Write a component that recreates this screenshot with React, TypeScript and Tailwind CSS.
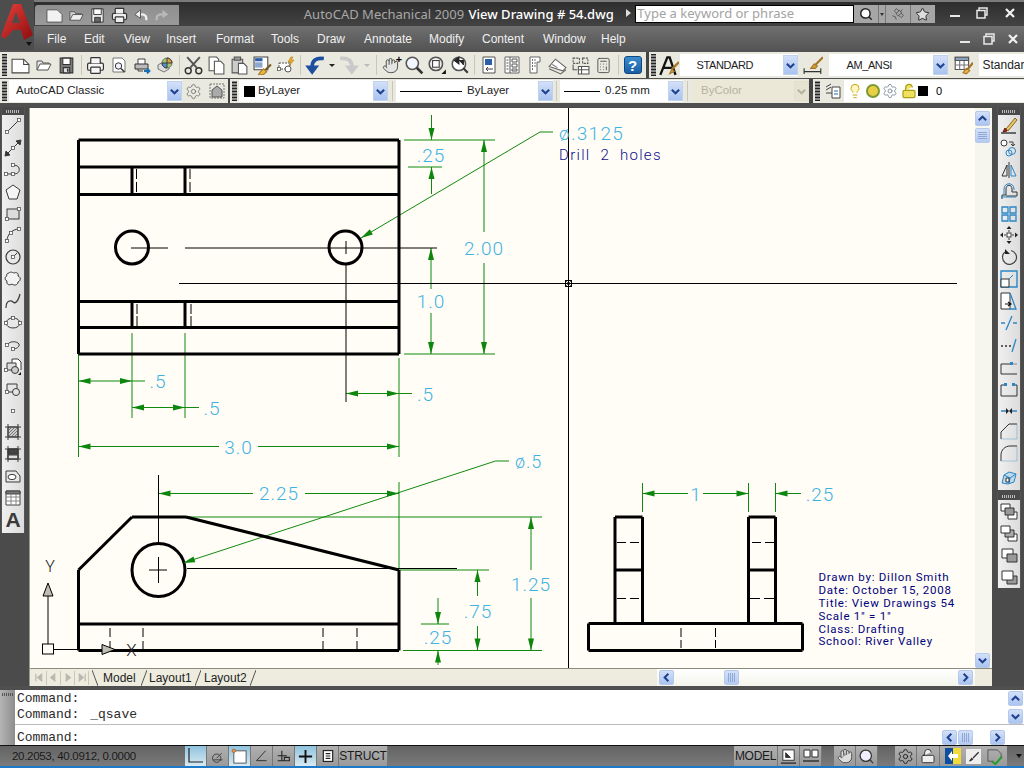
import type { ReactNode } from 'react';
import { Calculator, Hand, Lightbulb, LockOpen, Printer, Satellite, Search, Settings, Star } from 'lucide-react';

const INK = '#3a3a3a';
const BLUE = '#2b86c5';

function Ic({ children, s = 18 }: { children: ReactNode; s?: number }) {
  return (
    <svg viewBox="0 0 18 18" width={s} height={s} fill="none" stroke={INK} strokeWidth="1">
      {children}
    </svg>
  );
}

function Sq({ x, y }: { x: number; y: number }) {
  return <rect x={x - 1.5} y={y - 1.5} width="3" height="3" fill="#fff" stroke="#555" strokeWidth=".8" />;
}

// top toolbar icons
const newIcon = <Ic s={19}><path d="M1 3h11l5 5v8H1z" fill="#fff" stroke="#444" /><path d="M12 3v5h5" stroke="#444" /></Ic>;
const openIcon = <Ic><path d="M2 14V5h5l1 2h6v2" fill="#e8e8e8" stroke="#555" /><path d="M2 14l3-6h11l-3 6z" fill="#fff" stroke="#555" /></Ic>;
const saveIcon = <Ic s={19}><path d="M3 2h12v14H3z" fill="#7a7a7a" stroke="#333" /><path d="M5.500 2h7v6h-7z" fill="#fff" stroke="#333" /><path d="M6 11h6v5H6z" fill="#ddd" stroke="#333" /><path d="M9.500 12h1.500v3H9.500z" fill="#333" stroke="none" /></Ic>;
const previewIcon = <Ic><path d="M3 2h9l3 3v11H3z" fill="#fff" stroke="#777" /><circle cx="8.500" cy="10" r="3.200" fill="#eef" stroke="#333" /><path d="M11 12.500l3.500 3.500" strokeWidth="1.600" /></Ic>;
const publishIcon = <Ic><path d="M5 8V3h7v5" fill="#fff" stroke="#444" /><path d="M2 8h13v5H2z" fill="#bbb" stroke="#333" /><path d="M5 13v2h5" stroke="#444" /><path d="M11 15h5M14 12.500l2.500 2.500-2.500 2.500" stroke="#1b6fb5" strokeWidth="1.800" /></Ic>;
const cubeIcon = <Ic><path d="M2 9l5-3 6 2v5l-5 3-6-3z" fill="#ddd" stroke="#777" /><circle cx="11" cy="7" r="5" fill="#9ec96a" stroke="#777" /><path d="M11 2a5 5 0 0 1 5 5h-5z" fill="#e0a040" /><path d="M6 7h5v5a5 5 0 0 1-5-5z" fill="#5a8fd0" /></Ic>;
const scissors = <Ic s={19}><path d="M3 1l9 10M15 1L6 11" stroke="#555" strokeWidth="1.800" /><circle cx="4" cy="14" r="2.800" stroke="#333" strokeWidth="1.400" /><circle cx="14" cy="14" r="2.800" stroke="#333" strokeWidth="1.400" /></Ic>;
const copyIcon = <Ic s={19}><path d="M2 1h7l2 2v11H2z" fill="#fff" stroke="#555" /><path d="M7 5h6l3 3v9H7z" fill="#fff" stroke="#555" /></Ic>;
const pasteIcon = <Ic s={19}><path d="M2 3h10v13H2z" fill="#ccc" stroke="#555" /><path d="M4 1h6v3H4z" fill="#999" stroke="#555" /><path d="M8 7h5l3 3v7H8z" fill="#fff" stroke="#555" /></Ic>;
const matchIcon = <Ic s={19}><path d="M1 1h13v12H1z" fill="#fff" stroke="#444" /><path d="M2 2h7v3H2z" fill="#2c5fa8" stroke="none" /><path d="M2 6h7v5H2z" fill="#8aa8d0" stroke="none" /><path d="M17 8l-6 6" stroke="#7a5a2a" strokeWidth="2" /><path d="M7 15l3-3 3 3-3 2.500-5 .500z" fill="#e7b63c" stroke="#a5762a" /></Ic>;
const blockIcon = <Ic><path d="M2 7h11v6H2z" fill="#fff" stroke="#555" strokeDasharray="2 1" /><circle cx="11" cy="13" r="3" fill="#fff" stroke="#555" /><Sq x={2} y={13} /><path d="M14 1l-3 5h3l-2 4 5-6h-3l2-3z" fill="#f0b020" stroke="#b47a10" strokeWidth=".6" /></Ic>;
const undoIcon = <Ic s={21}><path d="M17 3C10 2 7 5 7 10" stroke="#1d4f9e" strokeWidth="3.200" /><path d="M1 9h12l-6 8z" fill="#1d4f9e" stroke="none" /></Ic>;
const redoIcon = <Ic s={21}><path d="M1 3c7-1 10 2 10 7" stroke="#c9c9c9" strokeWidth="3.200" /><path d="M5 9h12l-6 8z" fill="#c9c9c9" stroke="none" /></Ic>;
const panIcon = <span className="relative flex"><Hand size={17} strokeWidth={1.300} color="#444" fill="#e4e4e4" /><span className="absolute -top-[4px] -right-[3px] text-[11px] leading-none font-bold text-black">+</span></span>;
const zoomIcon = <Ic s={20}><circle cx="7.500" cy="7.500" r="5.500" fill="#f3f5ff" stroke="#555" strokeWidth="1.400" /><path d="M11.500 11.500l5 5" stroke="#333" strokeWidth="2.400" /></Ic>;
const zoomWin = <Ic s={20}><circle cx="8" cy="8" r="6" fill="#eee" stroke="#555" strokeWidth="1.400" /><rect x="5" y="5" width="6" height="6" fill="#fff" stroke="#444" /><path d="M17 13v4h-4z" fill="#111" stroke="none" /></Ic>;
const zoomPrev = <Ic s={20}><circle cx="8" cy="8" r="6" fill="#fff" stroke="#555" strokeWidth="1.400" /><path d="M12 12l4 4" strokeWidth="2" /><path d="M12 9V5H8M8 2v6l-4-3z" fill="#222" stroke="#222" strokeWidth="1" /></Ic>;
const sheetIcon = <Ic><path d="M3 1h12v16H3z" fill="#fff" stroke="#555" /><path d="M5 3h7v6H5z" fill="#2c5fa8" stroke="none" /><path d="M13 13H6M8 11l-2 2 2 2" stroke="#444" /></Ic>;
const gridIcon = <Ic><path d="M2 1h14v16H2z" fill="#fff" stroke="#666" /><path d="M7 1v16M3.500 4h2M3.500 7h2M3.500 10h2M3.500 13h2M9 3h5v3H9zM9 8h5v3H9zM9 13h5v2H9z" stroke="#555" /></Ic>;
const palette = <Ic><path d="M4 1h10v5h-3v11H4z" fill="#fff" stroke="#666" /><path d="M6 4h1M8.500 4h1M6 7h1M8.500 7h1M6 10h1M8.500 10h1M6 13h1" stroke="#444" strokeWidth="1.400" /></Ic>;
const layersStack = <Ic s={19}><path d="M1 10l6-7 10 8-3 3z" fill="#fff" stroke="#666" /><path d="M1 12l11 5 5-4" stroke="#666" /><path d="M4 8l5 3" stroke="#777" /></Ic>;
const refIcon = <Ic s={19}><path d="M2 2h6v5H2z" stroke="#555" strokeDasharray="2 1" /><path d="M11 2h5v5h-5z" stroke="#555" strokeDasharray="2 1" /><path d="M7 10h10v7H7z" fill="#fff" stroke="#555" /><path d="M7 13h10M10 10v7" stroke="#555" /><path d="M2 8v5h4" stroke="#555" /></Ic>;
const calcIcon = <Calculator size={17} strokeWidth={1.200} color="#444" />;
const helpIcon = <div className="flex h-[18px] w-[18px] items-center justify-center rounded-[3px] border border-[#10457f] bg-gradient-to-b from-[#3b8ed0] to-[#1a5ea6] font-['Liberation_Sans'] text-[15px] leading-none font-bold text-white">?</div>;

const textStyleIcon = <Ic s={21}><path d="M2 17L8 2h2l5 15M5 11h8" stroke="#111" strokeWidth="2" /><path d="M18 6l-6 6" stroke="#a5762a" strokeWidth="2" /><path d="M10 16l2-4 2 2z" fill="#e7b63c" stroke="#a5762a" /></Ic>;
const dimStyleIcon = <Ic s={20}><path d="M1 12v5M16 12v5M1 15h15" stroke="#333" /><path d="M18 2l-7 7" stroke="#a5762a" strokeWidth="2" /><path d="M7 12l3-4 3 2-2 2z" fill="#d8a030" stroke="#a5762a" /></Ic>;
const tableStyleIcon = <Ic s={20}><path d="M2 2h12v11H2z" fill="#fff" stroke="#555" /><path d="M2 5h12M2 9h12M6 5v8M10 5v8" stroke="#777" /><path d="M2 2h12v3H2z" fill="#8aa0c0" stroke="#555" /><path d="M18 7l-5 6" stroke="#a5762a" strokeWidth="2" /><path d="M9 16l3-4 3 2-3 3z" fill="#e7b63c" stroke="#a5762a" /></Ic>;
const workspaceIcon = <Settings size={17} strokeWidth={1.100} color="#666" />;
const cleanIcon = <Ic><path d="M2 2h14v14H2z" stroke="#777" strokeDasharray="2 1" /><path d="M4 15V8l5-4 5 4v7z" fill="#aaa" stroke="#555" /></Ic>;
const layerPropIcon = <Ic><path d="M2 5l5-3M2 8l5-3M2 11h6" stroke="#444" /><path d="M8 5h8v11H8z" fill="#fff" stroke="#444" /><path d="M10 9h4M10 12h4" stroke="#1b6fb5" /></Ic>;

// left toolbar
const drawIcons: ReactNode[] = [
  <Ic key="line"><path d="M4 14L15 3" /><Sq x={3} y={15} /><Sq x={15} y={3} /></Ic>,
  <Ic key="xline"><path d="M1 17L17 1" /><path d="M1 17l1-5 4 4zM17 1l-1 5-4-4z" fill={INK} /><Sq x={9} y={9} /></Ic>,
  <Ic key="pline"><path d="M3 13h6c5 0 7-2 6-6-1-3-5-3-6-2" /><Sq x={2} y={13} /><Sq x={9} y={13} /><Sq x={9} y={4} /></Ic>,
  <Ic key="polygon"><path d="M9 2l7 5-3 9H5L2 7z" fill="#f6f6f6" /></Ic>,
  <Ic key="rect"><rect x="3" y="4" width="12" height="10" fill="#dcdcdc" /><Sq x={15} y={4} /><Sq x={3} y={14} /></Ic>,
  <Ic key="arc"><path d="M3 15C3 8 9 3 15 3" /><Sq x={3} y={15} /><Sq x={7} y={7} /><Sq x={15} y={3} /></Ic>,
  <Ic key="circle"><circle cx="9" cy="9" r="7" strokeWidth="1.200" fill="#e8e8e8" /><path d="M9 9l4-4" /><Sq x={9} y={9} /></Ic>,
  <Ic key="cloud"><path d="M5 3c2-2 4 0 5 0 2-1 5 0 4 3 3 1 3 5 0 6 0 3-4 4-6 2-3 2-6 0-5-3-3-1-2-5 0-5-1-1 0-3 2-3z" fill="#f2f2f2" /></Ic>,
  <Ic key="spline"><path d="M2 16C2 8 7 8 9 10s5 0 7-8" strokeWidth="1.200" /></Ic>,
  <Ic key="ellipse"><ellipse cx="9" cy="9" rx="7" ry="5" fill="#e8e8e8" /><Sq x={2} y={9} /><Sq x={16} y={9} /><Sq x={9} y={4} /></Ic>,
  <Ic key="earc"><path d="M4 8c2-3 9-3 11 0 1 3-3 5-6 5" /><Sq x={3} y={9} /><Sq x={9} y={13} /></Ic>,
  <Ic key="insert"><path d="M8 5V1h6l3 3v8" fill="#fff" /><path d="M3 5h9v7H3z" fill="#ddd" /><circle cx="11" cy="12" r="3.500" fill="#ccc" /><Sq x={2} y={12} /><path d="M14 17h3v-3z" fill="#111" stroke="none" /></Ic>,
  <Ic key="block"><path d="M3 4h10v8H3z" fill="#e5e5e5" /><circle cx="12" cy="12" r="3.500" fill="#e5e5e5" /><Sq x={3} y={12} /></Ic>,
  <Ic key="point"><Sq x={9} y={9} /></Ic>,
  <Ic key="hatch"><path d="M4 4h10v10H4z" fill="#ccc" /><path d="M4 8l4-4M4 11l7-7M4 14l10-10M7 14l7-7M10 14l4-4" stroke="#777" /><path d="M1 4h16M1 14h16M4 1v16M14 1v16" /></Ic>,
  <Ic key="gradient"><path d="M4 4h10v10H4z" fill="#777" /><path d="M4 4h10v5H4z" fill="#444" /><path d="M4 10h10v4H4z" fill="#ddd" /><path d="M1 4h16M1 14h16M4 1v16M14 1v16" /></Ic>,
  <Ic key="region"><path d="M2 4h10l4 5v6H2z" fill="#e8e8e8" /><ellipse cx="8" cy="10" rx="4" ry="2.600" fill="#fff" /></Ic>,
  <Ic key="table"><path d="M2 2h14v14H2z" fill="#fff" stroke="#444" /><path d="M2 2h14v3H2z" fill="#777" stroke="#444" /><path d="M2 8h14M2 12h14M7 5v11M12 5v11" stroke="#888" /></Ic>,
  <span key="text" className="font-['Liberation_Sans'] text-[21px] leading-none font-bold text-[#3a3a3a]">A</span>,
];

// right toolbar
const modifyIcons: ReactNode[] = [
  <Ic key="erase"><path d="M6 12L15 1l2 2-9 11z" fill="#e7c46a" stroke="#8a6a20" /><path d="M5 11l-2 4 4-1z" fill="#b3261e" stroke="#6a1510" /><path d="M1 16h15" stroke="#333" strokeWidth="1.400" /></Ic>,
  <Ic key="copy"><circle cx="4" cy="4" r="3" fill="#fff" /><circle cx="12" cy="12" r="3.500" stroke={BLUE} /><circle cx="9" cy="14" r="3" stroke={BLUE} /><path d="M9 3h4v4M11 5l2 2 2-2" /></Ic>,
  <Ic key="mirror"><path d="M9 1v16" stroke="#333" /><path d="M7 4v11H2z" stroke="#333" /><path d="M11 4v11h5z" stroke={BLUE} /></Ic>,
  <Ic key="offset"><path d="M2 16v-4h4V6c0-5 6-5 6 0v3h5v4H6" stroke="#333" /><path d="M1 14h15" stroke={BLUE} /><path d="M4 12V6c0-7 10-7 10 0v1" stroke={BLUE} /></Ic>,
  <Ic key="array"><path d="M2 2h6v6H2zM10 2h6v6h-6zM2 10h6v6H2zM10 10h6v6h-6z" stroke={BLUE} strokeWidth="1.300" /></Ic>,
  <Ic key="move"><rect x="7" y="7" width="4" height="4" fill="#fff" /><path d="M9 1v5M9 12v5M1 9h5M12 9h5" strokeDasharray="2 1" /><path d="M9 0l2.500 3h-5zM9 18l2.500-3h-5zM0 9l3-2.500v5zM18 9l-3-2.500v5z" fill="#222" stroke="none" /></Ic>,
  <Ic key="rotate"><path d="M11 2.500A7 7 0 1 1 5 4" stroke="#444" strokeWidth="1.200" /><path d="M5 1v5h5z" fill="#222" stroke="none" /></Ic>,
  <Ic key="scale"><path d="M1 1h16v16H1z" stroke={BLUE} strokeWidth="1.400" /><path d="M1 9h8v8H1z" fill="#fff" stroke="#333" /><path d="M9 9l4-4" stroke={BLUE} /></Ic>,
  <Ic key="stretch"><path d="M1 1h9v16H1z" fill="#fff" stroke="#333" /><path d="M10 1l6 16H9" stroke={BLUE} strokeWidth="1.300" /><path d="M5 12h5M8 10l3 2-3 2" stroke="#111" strokeWidth="1.200" /></Ic>,
  <Ic key="trim"><path d="M1 9h4M13 9h4" stroke={BLUE} strokeWidth="1.300" /><path d="M6 16l6-14" stroke={BLUE} strokeWidth="1.300" /></Ic>,
  <Ic key="extend"><path d="M1 10h2M5 10h2M9 10h2" stroke="#333" strokeWidth="1.300" /><path d="M12 16l4-13" stroke={BLUE} strokeWidth="1.300" /></Ic>,
  <Ic key="breakpt"><path d="M1 6h10M1 6v10M1 16h16" stroke="#333" /><path d="M11 6h6" stroke="#888" /><rect x="10" y="4" width="3" height="3" fill={BLUE} stroke="none" /></Ic>,
  <Ic key="break"><path d="M1 16V5h4M13 5h4v11M1 16h16" stroke="#333" /><rect x="4" y="3" width="3" height="3" fill={BLUE} stroke="none" /><rect x="12" y="3" width="3" height="3" fill={BLUE} stroke="none" /></Ic>,
  <Ic key="join"><path d="M1 9h5M12 9h5" stroke={BLUE} strokeWidth="1.300" /><path d="M6 6l3 3-3 3zM12 6L9 9l3 3z" fill="#222" stroke="none" /></Ic>,
  <Ic key="chamfer"><path d="M1 16V9l8-8h8" stroke="#333" /><path d="M17 1v15H1" stroke={BLUE} strokeOpacity=".35" /></Ic>,
  <Ic key="fillet"><path d="M1 16V10C1 5 5 1 10 1h7" stroke="#333" /><path d="M17 1v15H1" stroke={BLUE} strokeOpacity=".35" /></Ic>,
  <Ic key="explode"><path d="M2 16l2-8 5-3 7 2-2 8-6 2z" fill="#bcd9ee" stroke={BLUE} /><path d="M4 8l6 3 6-4M10 11l-1 6" stroke={BLUE} /><path d="M6 11h3v4H6z" fill="#fff" stroke="#333" /></Ic>,
];

const drawOrderIcons: ReactNode[] = [
  <Ic key="front"><path d="M1 2h9v7H1z" fill="#fff" stroke="#333" /><path d="M8 10h9v7H8z" fill="#fff" stroke="#333" /><path d="M5 6h9v7H5z" fill="#999" stroke="#333" /></Ic>,
  <Ic key="back"><path d="M8 10h9v7H8z" fill="#fff" stroke="#333" /><path d="M5 6h9v7H5z" fill="#aaa" stroke="#333" /><path d="M1 2h9v7H1z" fill="#fff" stroke="#333" /></Ic>,
  <Ic key="above"><path d="M2 3h11v9H2z" fill="#fff" stroke="#333" /><path d="M7 8h10v8H7z" fill="#999" stroke="#333" /></Ic>,
  <Ic key="under"><path d="M7 8h10v8H7z" fill="#999" stroke="#333" /><path d="M2 3h11v9H2z" fill="#fff" stroke="#333" /></Ic>,
];

function Grip() {
  return <div className="mx-[2px] my-[2px] w-[5px] shrink-0 self-stretch bg-[repeating-linear-gradient(0deg,#222_0_1px,#8a8a8a_1px_3px)]" />;
}

function Cell({ children, w = 23 }: { children: ReactNode; w?: number }) {
  return (
    <div className="flex shrink-0 items-center justify-center" style={{ width: w }}>
      {children}
    </div>
  );
}

function Sep() {
  return <div className="mx-[2.500px] h-[20px] w-px shrink-0 bg-[#c9c7b8]" />;
}

function ScrollBtn({ dir, className = '' }: { dir: 'up' | 'down' | 'left' | 'right'; className?: string }) {
  const d = { up: 'M2 8l4-4 4 4', down: 'M2 4l4 4 4-4', left: 'M8 2L4 6l4 4', right: 'M4 2l4 4-4 4' }[dir];
  return (
    <div className={`flex h-[15px] w-[15px] shrink-0 items-center justify-center rounded-[2px] border border-[#b7c9ea] bg-gradient-to-b from-[#d3e0f8] to-[#aac4f0] ${className}`}>
      <svg viewBox="0 0 12 12" width="11" height="11" fill="none" stroke="#1e418f" strokeWidth="2.200">
        <path d={d} />
      </svg>
    </div>
  );
}

function Thumb({ vertical }: { vertical?: boolean }) {
  return (
    <div className="flex h-[15px] w-[15px] shrink-0 items-center justify-center rounded-[2px] border border-[#b7c9ea] bg-gradient-to-b from-[#d3e0f8] to-[#b5cbf2]">
      <div className={vertical ? 'h-[7px] w-[9px] bg-[repeating-linear-gradient(180deg,#8fa8d4_0_1px,transparent_1px_2px)]' : 'h-[9px] w-[7px] bg-[repeating-linear-gradient(90deg,#8fa8d4_0_1px,transparent_1px_2px)]'} />
    </div>
  );
}

function Combo({ w, children, disabled }: { w: number; children: ReactNode; disabled?: boolean }) {
  return (
    <div className={`flex h-[22px] shrink-0 items-center ${disabled ? 'bg-[#ebe8d8] text-[#b5b3a0]' : 'bg-white text-[#222]'}`} style={{ width: w }}>
      <div className="flex min-w-0 flex-1 items-center whitespace-nowrap">{children}</div>
      <div className={`flex h-[20px] w-[15px] shrink-0 items-center justify-center border ${disabled ? 'border-[#e2dfcf] bg-[#e6e3d3]' : 'border-[#c1d2ef] bg-gradient-to-b from-[#d3e0f8] to-[#a9c3f0]'}`}>
        <svg viewBox="0 0 12 12" width="11" height="11" fill="none" stroke={disabled ? '#b5b3a0' : '#1e418f'} strokeWidth="2.200">
          <path d="M2 4l4 4 4-4" />
        </svg>
      </div>
    </div>
  );
}

function WinButtons({ widths }: { widths: number[] }) {
  return (
    <>
      <div className="flex items-center justify-center" style={{ width: widths[0] }}><svg viewBox="0 0 12 12" width="12" height="12"><rect x="1" y="8" width="10" height="2" fill="#e8e8e8" /></svg></div>
      <div className="flex items-center justify-center" style={{ width: widths[1] }}><svg viewBox="0 0 12 12" width="12" height="12" fill="none" stroke="#e8e8e8" strokeWidth="1.500"><path d="M3 3V1h8v7H9" /><rect x="1" y="3.500" width="8" height="7.500" /></svg></div>
      <div className="flex items-center justify-center" style={{ width: widths[2] }}><svg viewBox="0 0 12 12" width="12" height="12" fill="none" stroke="#f2f2f2" strokeWidth="2.200"><path d="M2 2l8 8M10 2l-8 8" /></svg></div>
    </>
  );
}

function TitleBar() {
  return (
    <div className="flex h-[26px] items-start border-t-2 border-[#7b7b7b] bg-gradient-to-b from-[#2e2e2e] to-[#434343]">
      <div className="mt-[3px] ml-[35px] flex h-[20px] w-[144px] items-center gap-[4.500px] rounded-tl-[3px] bg-gradient-to-b from-[#8f8f8f] to-[#9a9a9a] pl-[11px]">
        <svg viewBox="0 0 18 18" width="17" height="17" fill="#f2f2f2" stroke="#555"><path d="M1 3h11l5 5v8H1z" /></svg>
        <svg viewBox="0 0 18 18" width="17" height="17" fill="#d6d6d6" stroke="#555"><path d="M2 14V5h5l1 2h6v2" /><path d="M2 14l3-6h11l-3 6z" fill="#eee" /></svg>
        <svg viewBox="0 0 18 18" width="17" height="17" fill="#eee" stroke="#333"><path d="M3 2h12v14H3z" /><path d="M5 2h8v6H5z" fill="#fff" /><path d="M6 11h6v5H6z" fill="#666" /></svg>
        <Printer size={17} strokeWidth={1.700} color="#333" fill="#eee" />
        <svg viewBox="0 0 18 18" width="17" height="17" fill="none" stroke="#eee" strokeWidth="2.400"><path d="M15 14c1-5-2-7-7-6" /><path d="M9 3L3 8l6 4z" fill="#eee" stroke="#555" strokeWidth="1" /></svg>
        <svg viewBox="0 0 18 18" width="17" height="17" fill="none" stroke="#b8b8b8" strokeWidth="2.400"><path d="M3 14C2 9 5 7 10 8" /><path d="M9 3l6 5-6 4z" fill="#b8b8b8" stroke="none" /></svg>
      </div>
      <div className="mt-[3px] ml-[125px] w-[165px] font-['Noto_Sans'] text-[13px] leading-[19px] whitespace-nowrap text-[#a8a8a8]">AutoCAD Mechanical 2009</div>
      <div className="mt-[3px] w-[158px] font-['Noto_Sans'] text-[13px] leading-[19px] font-medium whitespace-nowrap text-white">View Drawing # 54.dwg</div>
      <div className="mt-[7px] h-0 w-0 border-y-[4px] border-l-[5px] border-y-transparent border-l-[#ddd]" />
      <div className="mt-[3px] ml-[4px] flex h-[18px] w-[219px] items-center border border-black bg-white pl-[1px] font-['Noto_Sans'] text-[13px] text-[#a3a3a3]">Type a keyword or phrase</div>
      <div className="mt-[3px] flex h-[18px] w-[81px] items-center bg-[#a6a6a6]">
        <div className="flex h-full w-[25px] items-center justify-center border-r border-[#777]"><Search size={14} strokeWidth={2.500} color="#222" fill="#fff" /></div>
        <div className="flex h-full w-[7px] items-center justify-center border-r border-[#777]"><div className="h-0 w-0 border-x-[2px] border-t-[3px] border-x-transparent border-t-[#333]" /></div>
        <div className="flex h-full w-[25px] items-center justify-center border-r border-[#777]"><Satellite size={14} strokeWidth={1.300} color="#444" /></div>
        <div className="flex h-full w-[24px] items-center justify-center"><Star size={15} strokeWidth={1.500} color="#222" fill="#ddd" /></div>
      </div>
      <div className="mt-[5px] ml-[7px] flex items-center">
        <WinButtons widths={[27, 27, 28]} />
      </div>
    </div>
  );
}

const menus: [string, number][] = [
  ['File', 37], ['Edit', 40], ['View', 42], ['Insert', 50], ['Format', 55], ['Tools', 46], ['Draw', 47],
  ['Annotate', 65], ['Modify', 53], ['Content', 61], ['Window', 58], ['Help', 40],
];

function MenuBar() {
  return (
    <div className="flex h-[26px] items-center bg-gradient-to-b from-[#707070] to-[#525252] pl-[47px] font-['Liberation_Sans'] text-[12px] text-[#f0f0f0]">
      {menus.map(([m, w]) => (
        <div key={m} className="shrink-0" style={{ width: w }}>{m}</div>
      ))}
      <div className="ml-[312px] flex items-center">
        <WinButtons widths={[24, 24, 24]} />
      </div>
    </div>
  );
}

function ToolbarRow1() {
  return (
    <div className="flex h-[26px] bg-[#454545]">
      <div className="flex items-center bg-[#e9e9df] pr-[1.500px]">
        <Grip />
        <Cell>{newIcon}</Cell><Cell>{openIcon}</Cell><Cell>{saveIcon}</Cell>
        <Sep />
        <Cell><Printer size={19} strokeWidth={1.500} color="#333" fill="#f6f6f6" /></Cell><Cell>{previewIcon}</Cell><Cell>{publishIcon}</Cell><Cell>{cubeIcon}</Cell>
        <Sep />
        <Cell>{scissors}</Cell><Cell>{copyIcon}</Cell><Cell>{pasteIcon}</Cell><Cell>{matchIcon}</Cell><Cell>{blockIcon}</Cell>
        <Sep />
        <Cell>{undoIcon}</Cell>
        <Cell w={12}><div className="h-0 w-0 border-x-[3px] border-t-[3px] border-x-transparent border-t-[#222]" /></Cell>
        <Cell>{redoIcon}</Cell>
        <Cell w={12}><div className="h-0 w-0 border-x-[3px] border-t-[3px] border-x-transparent border-t-[#bbb]" /></Cell>
        <Sep />
        <Cell>{panIcon}</Cell><Cell>{zoomIcon}</Cell><Cell>{zoomWin}</Cell><Cell>{zoomPrev}</Cell>
        <Sep />
        <Cell>{sheetIcon}</Cell><Cell>{gridIcon}</Cell><Cell>{palette}</Cell><Cell>{layersStack}</Cell><Cell>{refIcon}</Cell><Cell>{calcIcon}</Cell>
        <Sep />
        <Cell>{helpIcon}</Cell>
      </div>
      <div className="ml-[3px] flex flex-1 items-center bg-[#e9e9df] font-['Liberation_Sans'] text-[11px]">
        <Grip />
        <Cell w={22}>{textStyleIcon}</Cell>
        <Combo w={118}><span className="pl-[17px] tracking-[-.4px]">STANDARD</span></Combo>
        <Cell w={31}>{dimStyleIcon}</Cell>
        <Combo w={119}><span className="pl-[18px] tracking-[-.4px]">AM_ANSI</span></Combo>
        <Cell w={31}>{tableStyleIcon}</Cell>
        <div className="flex h-[22px] flex-1 items-center overflow-hidden bg-white pl-[4px] text-[12px] whitespace-nowrap text-[#222]">Standard</div>
      </div>
    </div>
  );
}

function LinePreview({ w, label }: { w: number; label: string }) {
  return (
    <>
      <div className="ml-[4px] h-px bg-black" style={{ width: w }} />
      <span className="ml-[5px]">{label}</span>
    </>
  );
}

function ToolbarRow2() {
  return (
    <div className="mt-px flex h-[24px] bg-[#454545] font-['Liberation_Sans'] text-[11.500px]">
      <div className="flex items-center bg-[#e9e9df]">
        <Grip />
        <Combo w={173}><span className="pl-[7px]">AutoCAD Classic</span></Combo>
        <Cell w={23}>{workspaceIcon}</Cell>
        <Cell w={23}>{cleanIcon}</Cell>
      </div>
      <div className="ml-[2px] flex items-center bg-[#e9e9df]">
        <Grip />
        <Combo w={149}>
          <span className="ml-[5px] h-[11px] w-[11px] bg-black" />
          <span className="ml-[3px]">ByLayer</span>
        </Combo>
        <div className="mx-[3.500px] h-[20px] w-px bg-[#c9c7b8]" />
        <Combo w={157}><LinePreview w={62} label="ByLayer" /></Combo>
        <div className="mx-[3px] h-[20px] w-px bg-[#c9c7b8]" />
        <Combo w={123}><LinePreview w={36} label="0.25 mm" /></Combo>
        <div className="mx-[4px] h-[20px] w-px bg-[#c9c7b8]" />
        <Combo w={117} disabled><span className="pl-[9px]">ByColor</span></Combo>
      </div>
      <div className="ml-[4px] flex flex-1 items-center bg-[#e9e9df]">
        <Grip />
        <Cell w={22}>{layerPropIcon}</Cell>
        <div className="flex h-[22px] flex-1 items-center bg-white pl-[3px] text-[11px]">
          <Lightbulb size={16} strokeWidth={1.500} color="#c9a514" fill="#fff7c0" />
          <span className="ml-[3px] h-[14px] w-[14px] rounded-full border-2 border-[#7a9a30] bg-[#e9cf45]" />
          <Settings size={16} strokeWidth={1.500} color="#8a9aa8" className="ml-[2px]" />
          <LockOpen size={16} strokeWidth={1.800} color="#a8a010" fill="#f0e060" className="ml-[3px]" />
          <span className="ml-[1px] h-[10px] w-[10px] bg-black" />
          <span className="ml-[8px]">0</span>
        </div>
      </div>
    </div>
  );
}

function arrow(x: number, y: number, deg: number, key: string) {
  const r = (deg * Math.PI) / 180;
  const L = 12;
  const W = 3;
  const bx = x + Math.cos(r) * L;
  const by = y + Math.sin(r) * L;
  const nx = -Math.sin(r) * W;
  const ny = Math.cos(r) * W;
  return <polygon key={key} points={`${x},${y} ${bx + nx},${by + ny} ${bx - nx},${by - ny}`} fill="#0c860c" stroke="none" />;
}

type Seg = [number, number, number, number];

const thick: Seg[] = [
  [78.5, 140, 399, 140], [399, 140, 399, 354], [399, 354, 78.5, 354], [78.5, 354, 78.5, 140],
  [78.5, 167, 399, 167], [78.5, 194.5, 399, 194.5], [78.5, 301.5, 399, 301.5], [78.5, 327.5, 399, 327.5],
  [132, 167, 132, 194], [185, 167, 185, 194], [132, 301, 132, 327], [185, 301, 185, 327],
  [78.5, 570, 132, 517], [132, 517, 186, 517], [186, 517, 399, 570], [399, 570, 399, 650.5], [399, 650.5, 78.5, 650.5], [78.5, 650.5, 78.5, 570],
  [78.5, 624, 399, 624],
  [615, 517, 642.5, 517], [615, 517, 615, 623], [642.5, 517, 642.5, 623], [615, 570, 642.5, 570],
  [748.5, 517, 775.5, 517], [748.5, 517, 748.5, 623], [775.5, 517, 775.5, 623], [748.5, 570, 775.5, 570],
  [588.5, 623.5, 802.5, 623.5], [802.5, 623.5, 802.5, 650.5], [802.5, 650.5, 588.5, 650.5], [588.5, 650.5, 588.5, 623.5],
];

const thin: Seg[] = [
  [131, 248, 168, 248], [185, 248, 437, 248], [346, 241, 346, 254], [346, 264, 346, 402],
  [158.5, 475, 158.5, 543], [158.5, 557, 158.5, 583], [149, 570, 167, 570], [187, 568.5, 457, 568.5],
  [568.5, 108, 568.5, 668], [179, 283.5, 957, 283.5],
  [136.5, 169, 136.5, 179], [136.5, 182, 136.5, 192], [190, 169, 190, 179], [190, 182, 190, 192],
  [137, 304, 137, 314], [137, 316, 137, 326], [191, 304, 191, 314], [191, 316, 191, 326],
  [110, 628, 110, 637], [110, 641, 110, 649], [143, 628, 143, 637], [143, 641, 143, 649], [323, 628, 323, 637], [323, 641, 323, 649], [357, 628, 357, 637], [357, 641, 357, 649],
  [617, 542.5, 626, 542.5], [630, 542.5, 639, 542.5], [617, 598.5, 626, 598.5], [630, 598.5, 639, 598.5],
  [752, 542.5, 761, 542.5], [765, 542.5, 774, 542.5], [750, 598.5, 760, 598.5], [764, 598.5, 774, 598.5],
  [681, 628, 681, 637], [681, 640, 681, 648], [715.5, 628, 715.5, 637], [715.5, 640, 715.5, 648],
];

const green: Seg[] = [
  [404, 140, 495, 140], [404, 354, 495, 354], [408, 167, 442, 167],
  [431.5, 115, 431.5, 140], [431.5, 167, 431.5, 194],
  [484, 140, 484, 232], [484, 263, 484, 354],
  [431, 248, 431, 289], [431, 313, 431, 354],
  [540, 132, 553, 132], [540, 132, 361, 238],
  [78.5, 330, 78.5, 457], [132, 333, 132, 418], [185, 333, 185, 418], [399, 358, 399, 457],
  [78.5, 381, 145, 381], [132, 407.5, 199, 407.5], [346, 393.5, 412, 393.5],
  [78.5, 446.5, 219, 446.5], [258, 446.5, 399, 446.5],
  [158.5, 493.5, 253, 493.5], [305, 493.5, 399, 493.5], [399, 482, 399, 569],
  [495.5, 461, 509, 461], [495.5, 461, 183, 563],
  [186, 517, 542, 517], [399, 570, 489, 570], [403, 650.5, 542, 650.5],
  [531, 517, 531, 570], [531, 598, 531, 650.5],
  [477.5, 570, 477.5, 596], [477.5, 626, 477.5, 650.5],
  [438, 598, 438, 624], [421, 624, 449, 624], [438, 650.5, 438, 665],
  [642.5, 483, 642.5, 512], [748.5, 483, 748.5, 512], [775.5, 483, 775.5, 512],
  [642.5, 493.5, 688, 493.5], [703, 493.5, 748.5, 493.5], [775.5, 493.5, 801, 493.5],
];

const arrows: [number, number, number][] = [
  [431.5, 140, -90], [431.5, 167, 90], [484, 140, 90], [484, 354, -90], [431, 248, 90], [431, 354, -90],
  [78.5, 381, 0], [132, 381, 180], [132, 407.5, 0], [185, 407.5, 180], [346, 393.5, 0], [399, 393.5, 180],
  [78.5, 446.5, 0], [399, 446.5, 180], [361, 238, -30.6], [158.5, 493.5, 0], [399, 493.5, 180], [183, 563, -18],
  [531, 517, 90], [531, 650.5, -90], [477.5, 570, 90], [477.5, 650.5, -90], [438, 624, -90], [438, 650.5, 90],
  [642.5, 493.5, 0], [748.5, 493.5, 180], [775.5, 493.5, 0],
];

const dims: [string, number, number][] = [
  ['.25', 431, 155], ['2.00', 484, 248], ['1.0', 431, 301.5], ['.5', 158, 381.5], ['.5', 212, 408], ['.5', 425.5, 394],
  ['3.0', 238.5, 447], ['2.25', 279, 493.5], ['1.25', 531, 584], ['.75', 478, 611], ['.25', 438, 637], ['1', 696, 494], ['.25', 820, 494],
];

const notes: [string, number][] = [
  ['Drawn by:  Dillon Smith', 577], ['Date: October 15, 2008', 590], ['Title: View Drawings 54', 602.5],
  ['Scale 1" = 1"', 616], ['Class: Drafting', 629], ['School: River Valley', 641],
];

function Drawing() {
  const line = (s: Seg, i: number, prefix: string) => <line key={prefix + i} x1={s[0]} y1={s[1]} x2={s[2]} y2={s[3]} />;
  return (
    <svg viewBox="30 108 945 560" className="block h-full w-[945px] shrink-0">
      <g stroke="#0f8a0f" strokeWidth="1">{green.map((s, i) => line(s, i, 'g'))}</g>
      <g stroke="#000" strokeWidth="3">{thick.map((s, i) => line(s, i, 't'))}</g>
      <g stroke="#000" strokeWidth="1">{thin.map((s, i) => line(s, i, 'n'))}</g>
      <g fill="none" stroke="#000" strokeWidth="3">
        <circle cx="132" cy="247.500" r="16.500" />
        <circle cx="345.500" cy="247.500" r="16.500" />
        <circle cx="158.500" cy="570" r="26.500" />
      </g>
      {arrows.map(([x, y, d], i) => arrow(x, y, d, 'a' + i))}
      <rect x="565.500" y="280.500" width="6" height="6" fill="none" stroke="#000" />
      <path d="M565.500 280.500l6 6M571.500 280.500l-6 6" stroke="#000" strokeWidth=".6" />
      <g className="fill-[#3fb2e4] font-['Roboto'] text-[19px] font-light tracking-[1px]" textAnchor="middle" dominantBaseline="central">
        {dims.map(([t, x, y], i) => (
          <text key={i} x={x} y={y}>{t}</text>
        ))}
      </g>
      <text x="559" y="133" dominantBaseline="central" className="fill-[#3fb2e4] font-['Roboto'] text-[19px] font-light tracking-[1.300px]">ø.3125</text>
      <text x="515" y="461" dominantBaseline="central" className="fill-[#3fb2e4] font-['Roboto'] text-[18px] font-light tracking-[1px]">ø.5</text>
      <text x="559" y="155" dominantBaseline="central" className="fill-[#0d0d90] font-['Roboto'] text-[15px] font-light tracking-[1.300px]" xmlSpace="preserve">Drill  2  holes</text>
      <g className="fill-[#000080] font-['Roboto'] text-[11.500px] tracking-[.75px]" dominantBaseline="central">
        {notes.map(([t, y]) => (
          <text key={t} x="818.500" y={y}>{t}</text>
        ))}
      </g>
      {/* UCS icon */}
      <g fill="none" stroke="#000" strokeWidth="1">
        <rect x="42.500" y="644" width="11" height="10" fill="#fffdf5" />
        <path d="M53.500 649.500H102M48 644v-48" />
        <path d="M48 583l-5 13h10z" fill="#bdbdb0" />
        <path d="M102 644.500v10l13-5z" fill="#bdbdb0" />
      </g>
      <text x="50" y="566.500" textAnchor="middle" dominantBaseline="central" className="fill-[#222] font-['Roboto'] text-[16px] font-light">Y</text>
      <text x="131.500" y="650" textAnchor="middle" dominantBaseline="central" className="fill-[#222] font-['Roboto'] text-[17px] font-light">X</text>
    </svg>
  );
}

function TabBar() {
  const slash = (back?: boolean) => (
    <svg viewBox="0 0 6 16" width="6" height="16" fill="none" stroke="#555">
      <path d={back ? 'M0 0l6 16' : 'M0 16L6 0'} />
    </svg>
  );
  const nav = ['M2 2v8M9 2L4 6l5 4', 'M8 2L3 6l5 4', 'M4 2l5 4-5 4', 'M3 2l5 4-5 4M10 2v8'];
  return (
    <div className="flex h-[18px] items-stretch border-t border-[#8b8b80] bg-[#edecdf] font-['Liberation_Sans'] text-[12px] text-[#222]">
      <div className="ml-[3px] flex items-center">
        {nav.map((d) => (
          <div key={d} className="flex h-[14px] w-[14px] items-center justify-center border-r border-[#c9c8b8]">
            <svg viewBox="0 0 12 12" width="11" height="11" fill="#b9b9b0" stroke="#b9b9b0" strokeWidth="1.300"><path d={d} /></svg>
          </div>
        ))}
      </div>
      <div className="ml-[3px] flex items-center">
        {slash(true)}
        <div className="w-[43px] pl-[5px]">Model</div>
        {slash()}
        <div className="w-[48px] pl-[2px]">Layout1</div>
        {slash()}
        <div className="w-[49px] pl-[3px]">Layout2</div>
        {slash()}
      </div>
      <div className="ml-[401px] flex w-[318px] items-center bg-gradient-to-b from-[#ffffff] to-[#f4f4ec]">
        <ScrollBtn dir="left" className="ml-[2px]" />
        <div className="ml-[50px]"><Thumb /></div>
        <ScrollBtn dir="right" className="ml-[219px]" />
      </div>
    </div>
  );
}

function ToolbarHead() {
  return (
    <div className="flex h-[8px] items-center justify-center bg-[#4a4a4a]">
      <div className="h-[3px] w-[14px] bg-[repeating-linear-gradient(90deg,#bbb_0_1px,transparent_1px_2px)]" />
    </div>
  );
}

function Workspace() {
  return (
    <div className="flex h-[579px] bg-[#4b4b4b]">
      <div className="w-[29px] shrink-0 pl-px">
        <div className="w-[24px] border-x border-[#555] bg-gradient-to-r from-[#f0f0f0] to-[#dcdcdc]">
          <ToolbarHead />
          <div className="flex flex-col items-center pb-[2px]">
            {drawIcons.map((ic, i) => (
              <div key={i} className="flex h-[21.900px] items-center justify-center">{ic}</div>
            ))}
          </div>
        </div>
      </div>
      <div className="mt-px flex w-[963px] shrink-0 flex-col border-l border-[#9a9a90]">
        <div className="flex h-[560px] bg-[#fffdf5]">
          <Drawing />
          <div className="flex w-[17px] flex-col bg-[#f6f5ee] pt-[3px]">
            <ScrollBtn dir="up" />
            <div className="mt-[2px]"><Thumb vertical /></div>
            <ScrollBtn dir="down" className="mt-auto" />
          </div>
        </div>
        <TabBar />
      </div>
      <div className="flex w-[32px] shrink-0 flex-col pl-[5px]">
        <div className="w-[24px] border-x border-[#555] bg-gradient-to-r from-[#f0f0f0] to-[#dcdcdc] pb-[3px]">
          <ToolbarHead />
          <div className="flex flex-col items-center">
            {modifyIcons.map((ic, i) => (
              <div key={i} className="flex h-[21.900px] items-center justify-center">{ic}</div>
            ))}
          </div>
        </div>
        <div className="mt-[2px] w-[24px] border-x border-[#555] bg-gradient-to-r from-[#f0f0f0] to-[#dcdcdc]">
          <ToolbarHead />
          <div className="flex flex-col items-center">
            {drawOrderIcons.map((ic, i) => (
              <div key={i} className="flex h-[22px] items-center justify-center">{ic}</div>
            ))}
          </div>
        </div>
      </div>
    </div>
  );
}

function CommandWindow() {
  return (
    <div className="mt-[4px] flex h-[55px] bg-white font-['Liberation_Mono'] text-[13px] text-[#2a2a2a]">
      <div className="w-[15px] shrink-0 bg-gradient-to-r from-[#b5b5b5] to-[#8d8d8d]">
        <div className="mt-[3px] ml-[2px] h-[3px] w-[11px] bg-[repeating-linear-gradient(90deg,#555_0_1px,transparent_1px_2px)]" />
      </div>
      <div className="flex min-w-0 flex-1 flex-col">
        <div className="flex h-[36px] border-b border-[#bbb]">
          <div className="flex-1 pt-px pl-[2px] leading-[16px]">
            <div>Command:</div>
            <div className="whitespace-pre">Command: <span className="ml-[3px]">_qsave</span></div>
          </div>
          <div className="flex w-[16px] flex-col">
            <ScrollBtn dir="up" className="mt-[1px]" />
            <ScrollBtn dir="down" className="mt-[3px]" />
          </div>
        </div>
        <div className="flex flex-1 items-center">
          <div className="flex-1 pt-[3px] pl-[2px]">Command:</div>
          <div className="mr-[19px] flex items-center pt-[2px]">
            <ScrollBtn dir="left" />
            <div className="ml-[1px]"><Thumb /></div>
            <ScrollBtn dir="right" className="ml-[17px]" />
          </div>
        </div>
      </div>
    </div>
  );
}

function StatusCell({ children, w, on }: { children: ReactNode; w: number; on?: boolean }) {
  return (
    <div className={`flex h-full shrink-0 items-center justify-center border-r border-[#777] ${on ? 'bg-gradient-to-b from-[#8fc3dd] to-[#d8eaf2]' : 'bg-gradient-to-b from-[#b0b0b0] to-[#9a9a9a]'}`} style={{ width: w }}>
      {children}
    </div>
  );
}

function StatusBar() {
  return (
    <div>
      <div className="flex h-[21px] items-stretch border-t border-[#111] bg-gradient-to-b from-[#636363] to-[#7b7b7b] font-['Liberation_Sans'] text-[#1a1a1a]">
        <div className="w-[185px] shrink-0 pt-[3px] pl-[12px] text-[11.500px] leading-[15px] tracking-[-.3px]">20.2053, 40.0912, 0.0000</div>
        <StatusCell w={22} on><svg viewBox="0 0 18 18" width="18" height="18" fill="none" stroke="#222" strokeWidth="1.200"><path d="M2 1v14h14" /></svg></StatusCell>
        <StatusCell w={22}><svg viewBox="0 0 18 18" width="15" height="15" fill="none" stroke="#333"><circle cx="8" cy="11" r="5" /><path d="M4 13h11M8 11l6-6" /></svg></StatusCell>
        <StatusCell w={22} on><svg viewBox="0 0 18 18" width="17" height="17" fill="#fff" stroke="#555"><rect x="3" y="3" width="13" height="13" /><circle cx="3" cy="3" r="1.800" fill="#e89a5a" stroke="#b0642a" /></svg></StatusCell>
        <StatusCell w={22}><svg viewBox="0 0 18 18" width="15" height="15" fill="none" stroke="#333" strokeWidth="1.200"><path d="M14 2L3 14h12" /></svg></StatusCell>
        <StatusCell w={22}><svg viewBox="0 0 18 18" width="15" height="15" fill="none" stroke="#222" strokeWidth="1.300"><path d="M7 2v12M2 8h11M10 10h6v4h-6zM2 14h14" /></svg></StatusCell>
        <StatusCell w={22} on><svg viewBox="0 0 18 18" width="17" height="17" fill="none" stroke="#111" strokeWidth="2"><path d="M9 2v14M2 9h14" /></svg></StatusCell>
        <StatusCell w={22}><svg viewBox="0 0 18 18" width="14" height="14" fill="#fff" stroke="#222" strokeWidth="1.500"><rect x="3" y="2" width="12" height="14" /><path d="M6 6h6M6 9h6M6 12h6" /></svg></StatusCell>
        <StatusCell w={49}><span className="text-[12px] tracking-[-.2px]">STRUCT</span></StatusCell>
        <div className="w-[346px] shrink-0" />
        <StatusCell w={44}><span className="text-[12px] tracking-[-.3px]">MODEL</span></StatusCell>
        <StatusCell w={22}><svg viewBox="0 0 18 18" width="17" height="17" fill="#fff" stroke="#333"><rect x="3" y="2" width="12" height="11" /><path d="M6 10V5l5 5z" fill="#333" /><path d="M1 16h16" strokeWidth="1.500" /></svg></StatusCell>
        <StatusCell w={22}><svg viewBox="0 0 18 18" width="18" height="18" fill="#fff" stroke="#333"><path d="M2 3h6v7H2zM10 3h6v7h-6z" /><path d="M1 14h16" strokeWidth="1.500" /></svg></StatusCell>
        <div className="w-[12px] shrink-0" />
        <StatusCell w={22}><Hand size={16} strokeWidth={1.300} color="#444" fill="#ddd" /></StatusCell>
        <StatusCell w={22}><Search size={17} strokeWidth={1.800} color="#333" fill="#eef" /></StatusCell>
        <div className="w-[17px] shrink-0" />
        <StatusCell w={22}><Settings size={17} strokeWidth={1.400} color="#222" /></StatusCell>
        <StatusCell w={23}><LockOpen size={16} strokeWidth={1.300} color="#222" fill="#eee" /></StatusCell>
        <div className="flex h-full w-[67px] shrink-0 items-center justify-around bg-gradient-to-b from-[#b0b0b0] to-[#9a9a9a] px-[2px]">
          <svg viewBox="0 0 16 16" width="16" height="16"><rect width="16" height="16" fill="#f2d93a" /><rect width="8" height="16" fill="#0d4f9e" /><path d="M13 6H7V3L3 8l4 5v-3h6z" fill="#fff" /></svg>
          <svg viewBox="0 0 16 16" width="15" height="15"><rect width="16" height="16" fill="#eee" /><path d="M3 13l3-4 2 2-3 2zM7 9l6-6 1 1-6 6z" fill="#333" /></svg>
          <svg viewBox="0 0 18 18" width="17" height="17" fill="none" stroke="#555"><path d="M2 2h10l4 4v5M2 2v12h6" /><path d="M6 14l4 3 7-8" stroke="#2e9a2e" strokeWidth="2.200" /></svg>
        </div>
        <div className="flex flex-1 items-center justify-end pr-[2px]">
          <div className="h-0 w-0 border-x-[3px] border-t-[4px] border-x-transparent border-t-[#111]" />
        </div>
      </div>
      <div className="h-[2px] bg-[#1e78c8]" />
    </div>
  );
}

export default function App() {
  return (
    <div className="relative h-[768px] w-[1024px] overflow-hidden bg-[#4f4f4f]">
      {/* application button */}
      <div className="absolute top-0 left-0 z-10 h-[50px] w-[34px] bg-[#4d4d4d]">
        <svg viewBox="0 0 34 50" width="34" height="50">
          <defs>
            <linearGradient id="logoRed" x1="0" y1="0" x2="1" y2="1">
              <stop offset="0" stopColor="#e8403c" />
              <stop offset="1" stopColor="#8c0d0d" />
            </linearGradient>
          </defs>
          <path d="M13 4h8l12 31-9 5-3-10h-8l-8 9-4-3z" fill="url(#logoRed)" />
          <path d="M16 12l-4 11h8z" fill="#4d4d4d" />
          <path d="M26 42h6l-3 4z" fill="#111" />
        </svg>
      </div>
      <TitleBar />
      <MenuBar />
      <ToolbarRow1 />
      <ToolbarRow2 />
      <div className="h-[4px]" />
      <Workspace />
      <CommandWindow />
      <StatusBar />
    </div>
  );
}
